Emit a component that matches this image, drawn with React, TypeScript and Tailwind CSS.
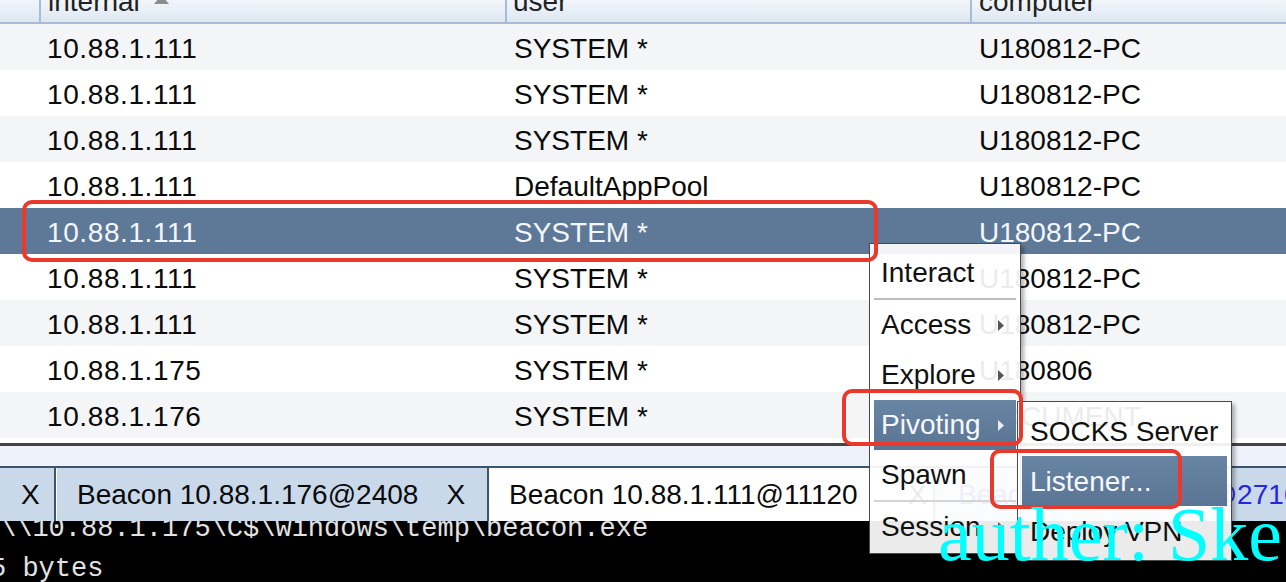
import React from "react";

const rows = [
  { ip: "10.88.1.111", user: "SYSTEM *", comp: "U180812-PC" },
  { ip: "10.88.1.111", user: "SYSTEM *", comp: "U180812-PC" },
  { ip: "10.88.1.111", user: "SYSTEM *", comp: "U180812-PC" },
  { ip: "10.88.1.111", user: "DefaultAppPool", comp: "U180812-PC" },
  { ip: "10.88.1.111", user: "SYSTEM *", comp: "U180812-PC" },
  { ip: "10.88.1.111", user: "SYSTEM *", comp: "U180812-PC" },
  { ip: "10.88.1.111", user: "SYSTEM *", comp: "U180812-PC" },
  { ip: "10.88.1.175", user: "SYSTEM *", comp: "U180806" },
  { ip: "10.88.1.176", user: "SYSTEM *", comp: "DOCUMENT" },
];

function Arrow({ light }: { light?: boolean }) {
  return (
    <svg width="6" height="11" viewBox="0 0 6 11" className="shrink-0">
      <polygon points="0,0 6,5.5 0,11" fill={light ? "#e8eef6" : "#555555"} />
    </svg>
  );
}

function MenuItem({ label, arrow, selected }: { label: string; arrow?: boolean; selected?: boolean }) {
  return (
    <div
      className={
        selected
          ? "h-[50px] flex items-center justify-between pl-[7px] pr-[12px] bg-gradient-to-b from-[#6985a4] to-[#5a7594] text-[#f5f8fc]"
          : "h-[50px] flex items-center justify-between pl-[7px] pr-[12px] text-[#111]"
      }
    >
      <span className="leading-[32px] whitespace-nowrap">{label}</span>
      {arrow ? <Arrow light={selected} /> : null}
    </div>
  );
}

function SubItem({ label, selected }: { label: string; selected?: boolean }) {
  return (
    <div
      className={
        selected
          ? "h-[50px] flex items-center pl-[8px] pt-[2px] bg-gradient-to-b from-[#6985a4] to-[#5a7594] text-[#f5f8fc]"
          : "h-[50px] flex items-center pl-[8px] pt-[2px] text-[#111]"
      }
    >
      <span className="leading-[32px] whitespace-nowrap">{label}</span>
    </div>
  );
}

export default function App() {
  return (
    <div className="relative w-[1286px] h-[582px] overflow-hidden bg-white flex flex-col font-['Liberation_Sans',Arial,sans-serif] text-[28px] text-[#0a0a0a]">
      {/* table header */}
      <div className="flex h-[24px] shrink-0 border-b-2 border-[#a4bcd6] bg-gradient-to-b from-[#f2f6fb] to-[#dde7f2] overflow-hidden text-[#222]">
        <div className="w-[41px] shrink-0 border-r-2 border-[#a4bcd6]" />
        <div className="w-[466px] shrink-0 border-r-2 border-[#a4bcd6] pl-[7px] flex items-start">
          <span className="leading-[28px] mt-[-12px]">internal</span>
          <svg width="15" height="9" viewBox="0 0 15 9" className="ml-[14px] mt-[-5px] shrink-0">
            <polygon points="7.5,0 15,9 0,9" fill="#8c8c8c" />
          </svg>
        </div>
        <div className="w-[465px] shrink-0 border-r-2 border-[#a4bcd6] pl-[6px] flex items-start">
          <span className="leading-[28px] mt-[-12px]">user</span>
        </div>
        <div className="flex-1 pl-[7px] flex items-start">
          <span className="leading-[28px] mt-[-12px]">computer</span>
        </div>
      </div>

      {/* rows */}
      <div className="flex flex-col shrink-0">
        {rows.map((r, i) => {
          const sel = i === 4;
          const bg = sel ? "bg-[#5e7997] text-[#f3f6fb]" : i % 2 === 0 ? "bg-[#f4f5f7]" : "bg-white";
          return (
            <div key={i} className={"flex h-[46px] leading-[42px] pt-[4px] whitespace-nowrap " + bg}>
              <div className="w-[41px] shrink-0" />
              <div className="w-[466px] shrink-0 pl-[6px] tracking-[0.6px]">{r.ip}</div>
              <div className="w-[465px] shrink-0 pl-[7px]">{r.user}</div>
              <div className="flex-1 pl-[7px]">{r.comp}</div>
            </div>
          );
        })}
      </div>

      <div className="h-[5px] shrink-0 bg-white" />
      <div className="h-[3px] shrink-0 bg-[#454545]" />
      <div className="h-[20px] shrink-0 bg-[#eef2fa]" />

      {/* tab bar */}
      <div className="flex h-[55px] shrink-0 border-t-2 border-[#3d5670] whitespace-nowrap">
        <div className="w-[56px] shrink-0 bg-[#c9d9ea] border-r-2 border-[#3d5670] flex items-center pl-[21px]">
          X
        </div>
        <div className="w-[433px] shrink-0 bg-[#c9d9ea] border-l border-white border-r-2 border-r-[#3d5670] flex items-center pl-[20px]">
          <span>Beacon 10.88.1.176@2408</span>
          <span className="ml-[28px]">X</span>
        </div>
        <div className="w-[446px] shrink-0 bg-white border-r-2 border-[#3d5670] flex items-center justify-between pl-[20px] pr-[6px]">
          <span>Beacon 10.88.1.111@11120</span>
          <span>X</span>
        </div>
        <div className="flex-1 bg-[#c9d9ea] flex items-center pl-[23px] text-[#2626e6]">
          <span>Beacon 10.88.1.175@2716</span>
        </div>
      </div>

      {/* console */}
      <div className="flex-1 bg-black overflow-hidden font-['Liberation_Mono','Courier_New',monospace] text-[27px] leading-[40px] text-[#e2e2e2] whitespace-pre">
        <div className="mt-[-12px]">{"\\\\10.88.1.175\\C$\\windows\\temp\\beacon.exe"}</div>
        <div className="ml-[-10px]">5 bytes</div>
      </div>

      {/* context menu */}
      <div className="absolute left-[869px] top-[243px] w-[152px] border border-[#4a4a4a] bg-white/[0.92] pt-[4px] pb-[1px] px-[4px] shadow-[3px_3px_4px_rgba(0,0,0,0.3)]">
        <MenuItem label="Interact" />
        <div className="h-[2px] bg-[#bdbdbd]" />
        <MenuItem label="Access" arrow />
        <MenuItem label="Explore" arrow />
        <MenuItem label="Pivoting" arrow selected />
        <MenuItem label="Spawn" />
        <div className="h-[2px] bg-[#d4d4d4]" />
        <MenuItem label="Session" arrow />
      </div>

      {/* submenu */}
      <div className="absolute left-[1017px] top-[401px] w-[215px] border border-[#4a4a4a] bg-white/[0.92] p-[4px] shadow-[3px_3px_4px_rgba(0,0,0,0.3)]">
        <SubItem label="SOCKS Server" />
        <SubItem label="Listener..." selected />
        <SubItem label="Deploy VPN" />
      </div>

      {/* red annotation boxes */}
      <div className="absolute left-[22px] top-[200px] w-[856px] h-[62px] border-4 border-[#e8392c] rounded-[10px]" />
      <div className="absolute left-[842px] top-[389px] w-[181px] h-[57px] border-4 border-[#e8392c] rounded-[10px]" />
      <div className="absolute left-[990px] top-[449px] w-[192px] h-[60px] border-4 border-[#e8392c] rounded-[10px]" />

      {/* watermark */}
      <div className="absolute left-[938px] top-[496px] font-['Liberation_Serif','Times_New_Roman',serif] text-[76px] leading-[76px] text-[#00ffff] whitespace-nowrap">
        auther: Ske
      </div>
    </div>
  );
}
